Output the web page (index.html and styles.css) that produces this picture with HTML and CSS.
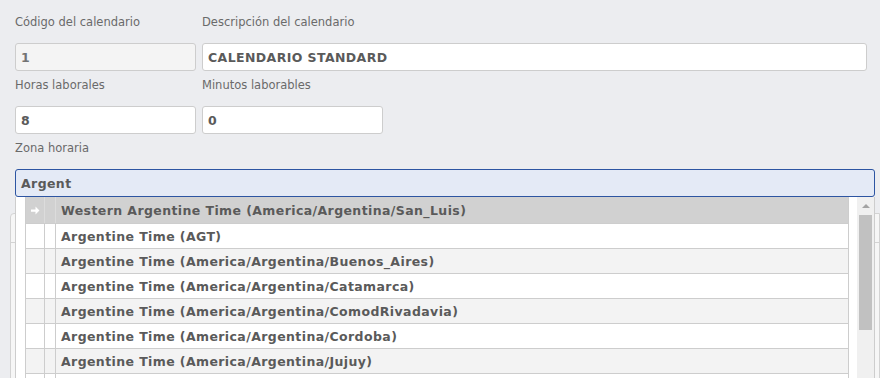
FILE: index.html
```html
<!DOCTYPE html>
<html lang="es">
<head>
    <meta charset="UTF-8">
    <meta name="viewport" content="width=device-width, initial-scale=1.0">
    <title>Calendario</title>
    <link rel="stylesheet" href="styles.css">
</head>
<body>
    <div class="form">
        <div class="row">
            <div class="field w-small">
                <label>Código del calendario</label>
                <div class="input disabled">1</div>
            </div>
            <div class="field w-desc">
                <label>Descripción del calendario</label>
                <div class="input">CALENDARIO STANDARD</div>
            </div>
        </div>
        <div class="row">
            <div class="field w-small">
                <label>Horas laborales</label>
                <div class="input">8</div>
            </div>
            <div class="field w-small">
                <label>Minutos laborables</label>
                <div class="input">0</div>
            </div>
        </div>
        <div class="row">
            <div class="field w-zone">
                <label>Zona horaria</label>
                <div class="input focused">Argent</div>
            </div>
        </div>
        <div class="panel">
            <div class="panel-head"></div>
        </div>
    </div>

    <div class="dropdown">
        <div class="list">
            <div class="opt selected">
                <div class="c1">
                    <svg width="9" height="9" viewBox="0 0 8 8"><path d="M0 3h4V0.5L7.5 4 4 7.5V5H0z" fill="#fff"/></svg>
                </div>
                <div class="c2"></div>
                <div class="c3">Western Argentine Time (America/Argentina/San_Luis)</div>
            </div>
            <div class="opt"><div class="c1"></div><div class="c2"></div><div class="c3">Argentine Time (AGT)</div></div>
            <div class="opt alt"><div class="c1"></div><div class="c2"></div><div class="c3">Argentine Time (America/Argentina/Buenos_Aires)</div></div>
            <div class="opt"><div class="c1"></div><div class="c2"></div><div class="c3">Argentine Time (America/Argentina/Catamarca)</div></div>
            <div class="opt alt"><div class="c1"></div><div class="c2"></div><div class="c3">Argentine Time (America/Argentina/ComodRivadavia)</div></div>
            <div class="opt"><div class="c1"></div><div class="c2"></div><div class="c3">Argentine Time (America/Argentina/Cordoba)</div></div>
            <div class="opt alt"><div class="c1"></div><div class="c2"></div><div class="c3">Argentine Time (America/Argentina/Jujuy)</div></div>
            <div class="opt"><div class="c1"></div><div class="c2"></div><div class="c3"></div></div>
        </div>
        <div class="scrollbar">
            <div class="arrow-up"></div>
            <div class="thumb"></div>
        </div>
    </div>
</body>
</html>
```

FILE: styles.css
```css
body {
    margin: 0;
    padding: 0;
    background-color: #ecedf0;
    font-family: "DejaVu Sans", Verdana, sans-serif;
    font-size: 12px;
    color: #666;
    overflow: hidden;
    height: 378px;
}
.form {
    padding: 14px 0 0 15px;
}
.row {
    display: flex;
    gap: 6px;
    margin-bottom: 6px;
}
.field label {
    display: block;
    font-size: 11.5px;
    line-height: 16px;
    margin-bottom: 13px;
    color: #6a6a6a;
}
.w-small { width: 181px; }
.w-desc { width: 665px; }
.w-zone { width: 860px; }
.input {
    box-sizing: border-box;
    height: 28px;
    line-height: 27px;
    padding: 0 5px;
    background: #fff;
    border: 1px solid #cdcdcd;
    border-radius: 3px;
    font-size: 12.5px;
    font-weight: bold;
    letter-spacing: 0.4px;
    color: #5a5a5a;
}
.input.disabled {
    background: #f4f4f4;
    color: #737373;
}
.input.focused {
    background: #e4eaf6;
    border-color: #2d55a2;
}
.panel {
    margin: 16px 0 0 -5px;
    height: 200px;
    background: #f6f6f6;
    border: 1px solid #d3d3d3;
    border-radius: 4px 0 0 0;
}
.panel-head {
    height: 28px;
    border-bottom: 1px solid #d3d3d3;
}
.dropdown {
    position: absolute;
    top: 197px;
    left: 15px;
    width: 860px;
    height: 181px;
    overflow: hidden;
    box-sizing: border-box;
    background: #fff;
    border-left: 1px solid #cdcdcd;
    border-right: 1px solid #cdcdcd;
    display: flex;
}
.list {
    margin-left: 9px;
    width: 824px;
    border-left: 1px solid #cdcdcd;
    border-right: 1px solid #cdcdcd;
}
.opt {
    display: flex;
    height: 25px;
    box-sizing: border-box;
    border-bottom: 1px solid #cdcdcd;
    font-size: 12.5px;
    font-weight: bold;
    letter-spacing: 0.4px;
    color: #5a5a5a;
    background: #fff;
}
.opt.alt { background: #f3f3f3; }
.opt.selected {
    height: 27px;
    background: #d1d1d1;
}
.c1 {
    width: 18px;
    border-right: 1px solid #cdcdcd;
    display: flex;
    align-items: center;
    justify-content: center;
}
.c2 {
    width: 10px;
    border-right: 1px solid #cdcdcd;
}
.selected .c1, .selected .c2 { border-right-color: #dcdcdc; }
.c3 {
    padding-left: 5px;
    line-height: 26px;
    white-space: nowrap;
}
.selected .c3 { line-height: 28px; }
.scrollbar {
    margin-left: 8px;
    width: 17px;
    background: #f0f0f0;
    position: relative;
}
.arrow-up {
    width: 0;
    height: 0;
    margin: 7px auto 0;
    border-left: 4px solid transparent;
    border-right: 4px solid transparent;
    border-bottom: 4px solid #a3a3a3;
}
.thumb {
    margin: 7px 2px 0 2px;
    height: 115px;
    background: #c1c1c1;
}
```
